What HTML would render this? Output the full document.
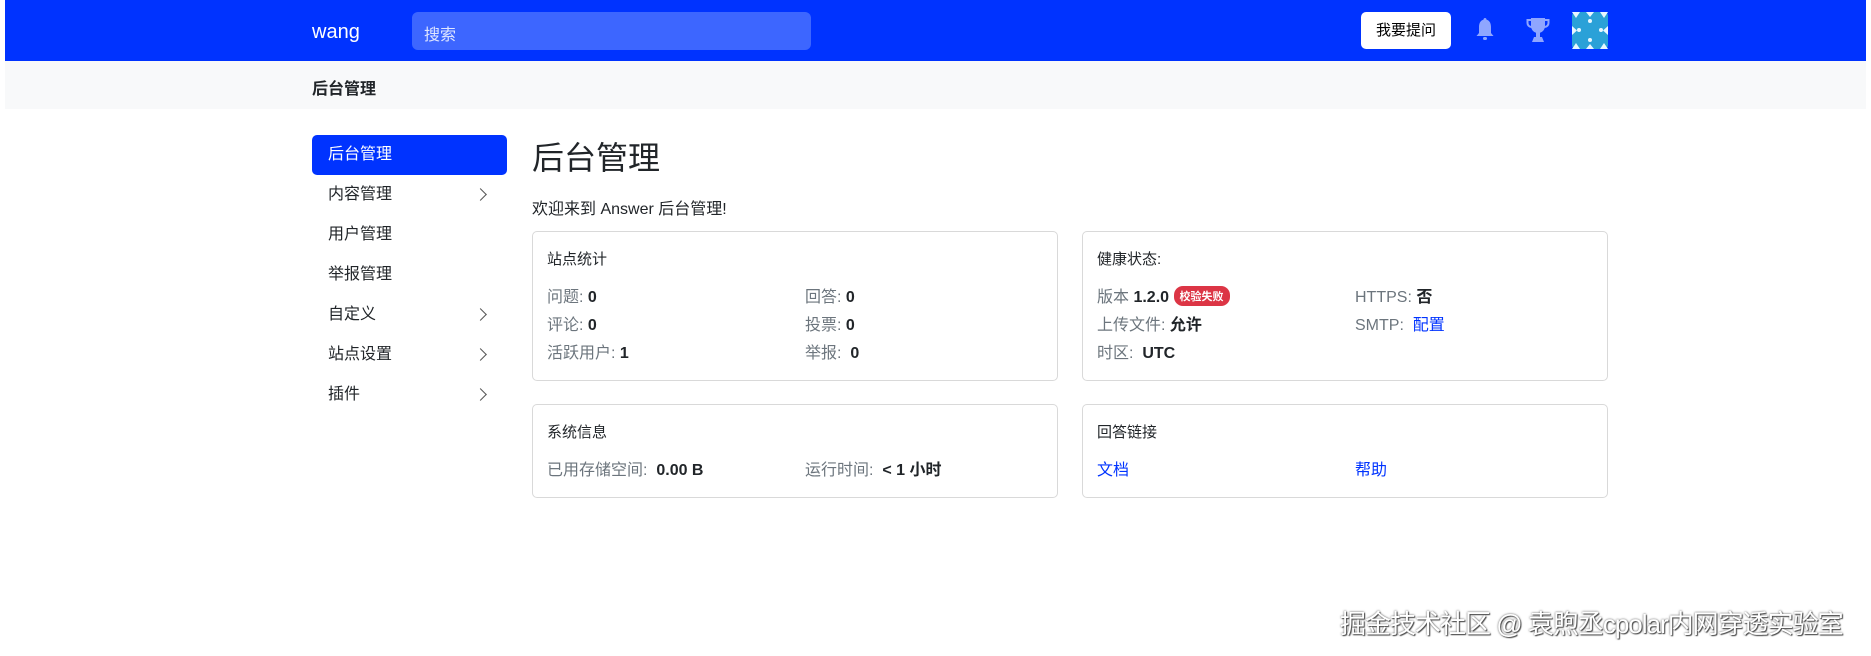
<!DOCTYPE html>
<html><head><meta charset="utf-8"><style>
*{box-sizing:border-box;margin:0;padding:0}
body{width:1871px;height:656px;overflow:hidden;background:#fff;font-family:"Liberation Sans","Noto Sans CJK SC",sans-serif;color:#212529;position:relative}
.hdr{position:absolute;left:5px;right:5px;top:0;height:61px;background:#0033ff}
.wang{position:absolute;left:312px;top:21px;color:#fff;font-size:20px}
.search{position:absolute;left:412px;top:12px;width:399px;height:38px;background:#3d66ff;border-radius:6px;color:#dfe6ff;font-size:16px;padding:9px 12px}
.btn{position:absolute;left:1361px;top:12px;width:90px;height:37px;background:#fff;border-radius:5px;font-size:15px;text-align:center;line-height:37px;color:#000}
.sub{position:absolute;left:5px;right:5px;top:61px;height:48px;background:#f8f9fa}
.sub span{position:absolute;left:307px;top:14px;font-size:16px;font-weight:bold}
.nav{position:absolute;left:312px;top:135px;width:195px}
.nav div{height:40px;line-height:40px;padding-left:16px;font-size:16px;position:relative}
.nav .act{background:#0033ff;color:#fff;border-radius:5px}
.nav .ch::after{content:"";position:absolute;right:22px;top:15px;width:8px;height:8px;border-right:1.3px solid #555;border-top:1.3px solid #555;transform:rotate(45deg)}
h1{position:absolute;left:532px;top:133px;font-size:32px;font-weight:normal}
.wel{position:absolute;left:532px;top:195px;font-size:16px}
.card{position:absolute;border:1px solid #d9d9d9;border-radius:5px;width:526px}
.ct{position:absolute;left:14px;top:16px;font-size:15px}
.r{position:absolute;font-size:16px;color:#6c757d}
.r b{color:#212529}
.lk{color:#0033ff}
.badge{display:inline-block;background:#dc3545;color:#fff;font-size:11px;font-weight:bold;border-radius:9px;padding:2px 6px;vertical-align:2px}
.wm{position:absolute;left:1340px;top:604px;font-size:26px;color:#fff;text-shadow:0 0 2px #555,1px 1px 1px #444;letter-spacing:-1px}
</style></head><body>
<div class="hdr"></div>
<div class="wang">wang</div>
<div class="search">搜索</div>
<div class="btn">我要提问</div>
<svg style="position:absolute;left:1475px;top:17px" width="20" height="26" viewBox="0 0 20 26"><path d="M10 1c1 0 1.5.8 1.5 1.6C15 3.5 16 7 16 10v6l2.5 3H1.5L4 16v-6c0-3 1-6.5 4.5-7.4C8.5 1.8 9 1 10 1z" fill="#8fa6ff"/><rect x="8" y="20" width="4" height="3" rx="1.5" fill="#8fa6ff"/></svg>
<svg style="position:absolute;left:1526px;top:17px" width="24" height="26" viewBox="0 0 24 26"><path d="M5 1h14v8a7 7 0 0 1-14 0z" fill="#8fa6ff"/><path d="M5 3H1.5v3a4 4 0 0 0 4 4M19 3h3.5v3a4 4 0 0 1-4 4" fill="none" stroke="#8fa6ff" stroke-width="2"/><rect x="10" y="15" width="4" height="5" fill="#8fa6ff"/><path d="M6 25l2-5h8l2 5z" fill="#8fa6ff"/></svg>
<svg style="position:absolute;left:1572px;top:12px" width="36" height="37" viewBox="0 0 36 37"><rect width="36" height="37" rx="4" fill="#2aa1d8"/><g fill="#e6f6ff"><path d="M0 0h8l-4 6zM36 0h-8l4 6zM0 37h8l-4-6zM36 37h-8l4-6zM14 0h8l-4 5zM14 37h8l-4-5zM0 14v9l5-4.5zM36 14v9l-5-4.5z"/><circle cx="18" cy="9" r="2"/><circle cx="18" cy="28" r="2"/><circle cx="7" cy="18" r="2"/><circle cx="29" cy="18" r="2"/></g></svg>
<div class="sub"><span>后台管理</span></div>
<div class="nav">
<div class="act">后台管理</div>
<div class="ch">内容管理</div>
<div>用户管理</div>
<div>举报管理</div>
<div class="ch">自定义</div>
<div class="ch">站点设置</div>
<div class="ch">插件</div>
</div>
<h1>后台管理</h1>
<div class="wel">欢迎来到 Answer 后台管理!</div>
<div class="card" style="left:532px;top:231px;height:150px">
<div class="ct">站点统计</div>
<div class="r" style="left:14px;top:51px">问题: <b>0</b></div>
<div class="r" style="left:272px;top:51px">回答: <b>0</b></div>
<div class="r" style="left:14px;top:79px">评论: <b>0</b></div>
<div class="r" style="left:272px;top:79px">投票: <b>0</b></div>
<div class="r" style="left:14px;top:107px">活跃用户: <b>1</b></div>
<div class="r" style="left:272px;top:107px">举报: &nbsp;<b class="lk">0</b></div>
</div>
<div class="card" style="left:1082px;top:231px;height:150px">
<div class="ct">健康状态:</div>
<div class="r" style="left:14px;top:51px">版本 <b>1.2.0</b> <span class="badge">校验失败</span></div>
<div class="r" style="left:272px;top:51px">HTTPS: <b>否</b></div>
<div class="r" style="left:14px;top:79px">上传文件: <b>允许</b></div>
<div class="r" style="left:272px;top:79px">SMTP: &nbsp;<span class="lk">配置</span></div>
<div class="r" style="left:14px;top:107px">时区: &nbsp;<b>UTC</b></div>
</div>
<div class="card" style="left:532px;top:404px;height:94px">
<div class="ct">系统信息</div>
<div class="r" style="left:14px;top:51px">已用存储空间: &nbsp;<b>0.00 B</b></div>
<div class="r" style="left:272px;top:51px">运行时间: &nbsp;<b>&lt; 1 小时</b></div>
</div>
<div class="card" style="left:1082px;top:404px;height:94px">
<div class="ct">回答链接</div>
<div class="r lk" style="left:14px;top:51px;color:#0033ff">文档</div>
<div class="r lk" style="left:272px;top:51px;color:#0033ff">帮助</div>
</div>
<div class="wm">掘金技术社区 @ 袁煦丞cpolar内网穿透实验室</div>
</body></html>
